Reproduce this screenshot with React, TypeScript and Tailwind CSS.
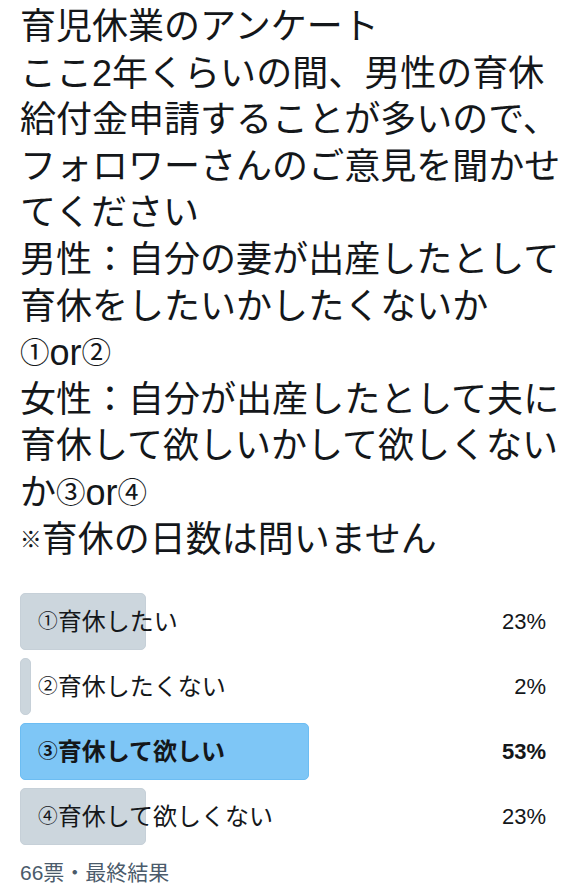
import React from "react";

const lines = [
  "育児休業のアンケート",
  "ここ2年くらいの間、男性の育休",
  "給付金申請することが多いので、",
  "フォロワーさんのご意見を聞かせ",
  "てください",
  "男性：自分の妻が出産したとして",
  "育休をしたいかしたくないか",
  "①or②",
  "女性：自分が出産したとして夫に",
  "育休して欲しいかして欲しくない",
  "か③or④",
  "※育休の日数は問いません",
];

const options = [
  { label: "①育休したい", pct: 23, win: false },
  { label: "②育休したくない", pct: 2, win: false },
  { label: "③育休して欲しい", pct: 53, win: true },
  { label: "④育休して欲しくない", pct: 23, win: false },
];

function Rich({ text }: { text: string }) {
  const parts = Array.from(text);
  return (
    <>
      {parts.map((c, i) => {
        if ("①②③④".includes(c)) {
          return (
            <span key={i} className="text-[0.82em] align-[0.083em]">
              {c}
            </span>
          );
        }
        if (c === "※") {
          return (
            <span key={i} className="text-[0.6em] align-[0.25em]">
              {c}
            </span>
          );
        }
        return <React.Fragment key={i}>{c}</React.Fragment>;
      })}
    </>
  );
}

export default function App() {
  return (
    <div
      className="w-[586px] h-[896px] bg-white text-[#14171a] overflow-hidden"
      style={{ fontFamily: '"Liberation Sans", "Noto Sans CJK JP", sans-serif' }}
    >
      <div className="pt-[4px] pl-[20px] text-[36px] leading-[46.6px]">
        {lines.map((l, i) => (
          <div key={i} className="whitespace-nowrap h-[46.6px]">
            <Rich text={l} />
          </div>
        ))}
      </div>
      <div className="mt-[30px] px-[20px] flex flex-col gap-[8px]">
        {options.map((o, i) => (
          <div key={i} className="relative h-[57px] flex items-center justify-between">
            <div
              className={
                "absolute inset-y-0 left-0 rounded-[5px] border " +
                (o.win ? "bg-[#7ec6f6] border-[#6cbdf3]" : "bg-[#ccd6dd] border-[#c6d0d8]")
              }
              style={{ width: `${o.pct}%` }}
            />
            <span
              className={
                "relative pl-[18px] text-[24px] whitespace-nowrap " + (o.win ? "font-bold" : "")
              }
            >
              <Rich text={o.label} />
            </span>
            <span
              className={"relative pr-[20px] text-[22px] " + (o.win ? "font-bold" : "")}
            >
              {o.pct}%
            </span>
          </div>
        ))}
      </div>
      <div className="mt-[14px] px-[20px] text-[21px] leading-[28px] text-[#4b5b6b]">
        66票・最終結果
      </div>
    </div>
  );
}
